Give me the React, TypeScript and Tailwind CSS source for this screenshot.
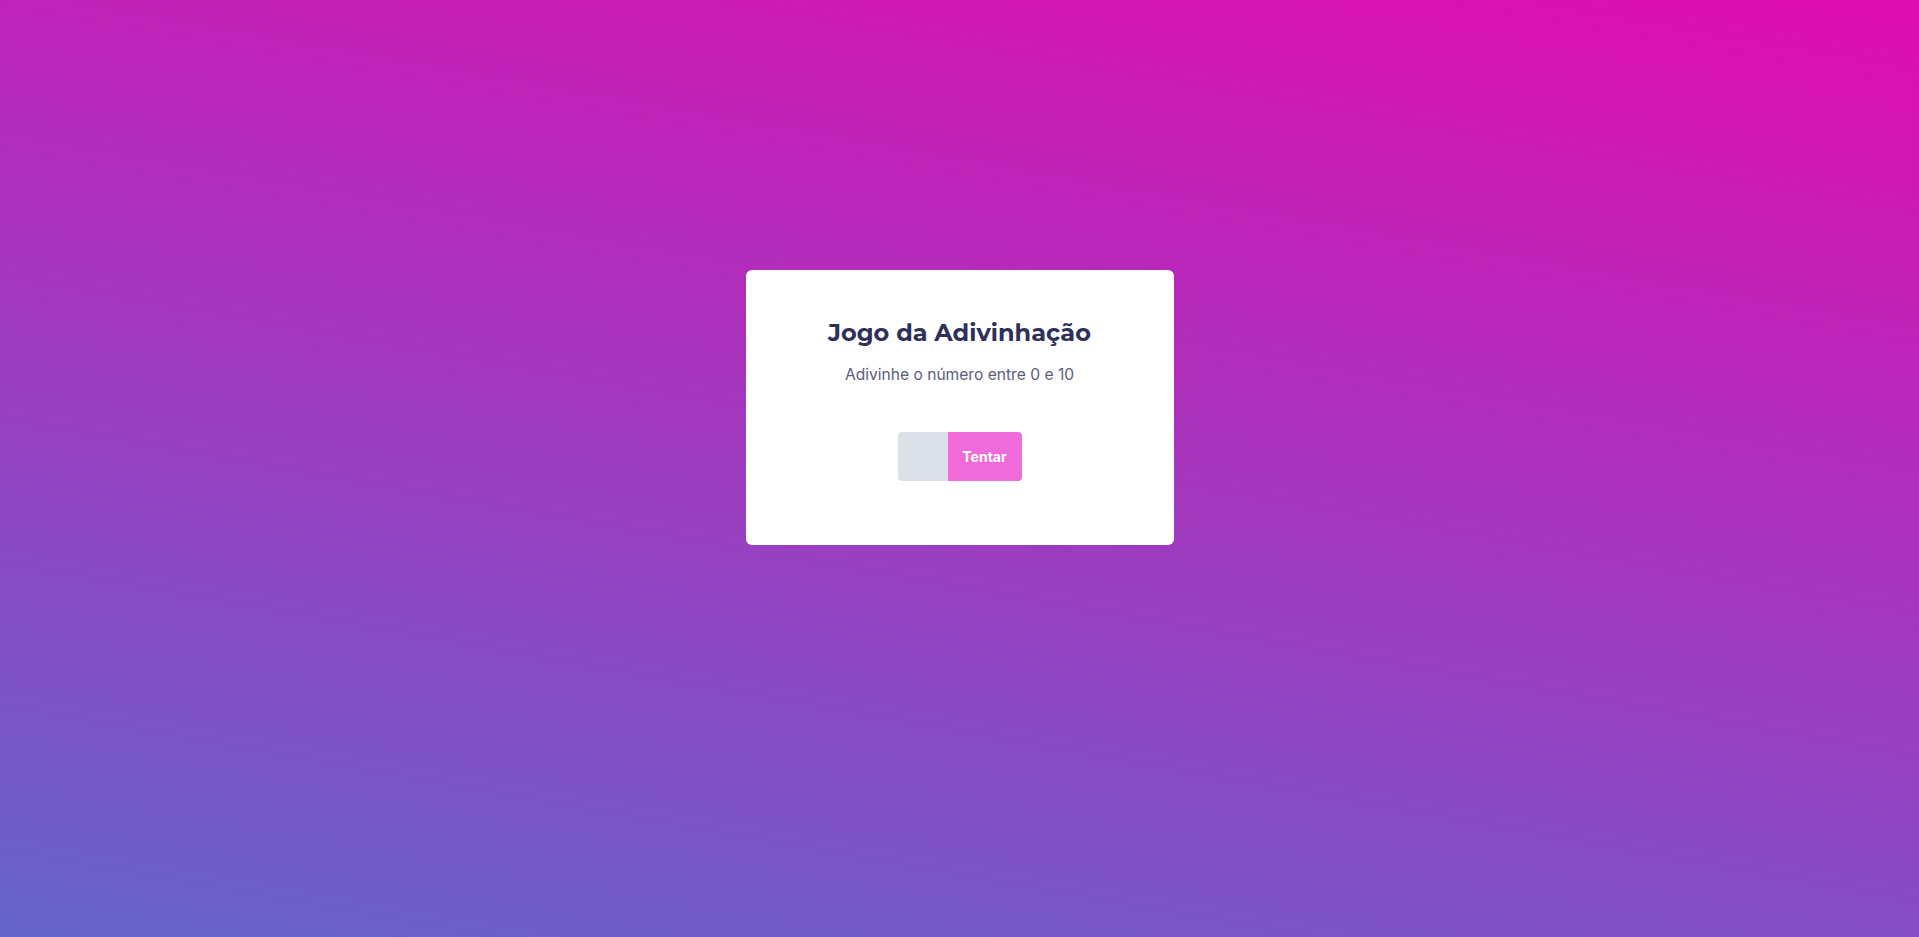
import { useState } from 'react'

const App = () => {
  const [guess, setGuess] = useState('')

  return (
    <div className="min-h-screen w-full flex justify-center pt-[270px] bg-[linear-gradient(10deg,#6465cc,#e00cb0)]">
      <div className="w-[428px] h-[275px] bg-white rounded-md flex flex-col items-center pt-[47px]">
        {/* Title */}
        <h1 className="text-[24px] leading-[32px] font-bold text-[#2e3058] font-['Montserrat','Inter',sans-serif]">
          Jogo da Adivinhação
        </h1>
        <p className="mt-[14px] text-[15.6px] leading-[24px] text-[#5b5c7c] font-['Inter',sans-serif]">
          Adivinhe o número entre 0 e 10
        </p>

        {/* Guess form */}
        <div className="mt-[45px] flex h-[49px]">
          <input
            value={guess}
            onChange={e => setGuess(e.target.value)}
            className="w-[50px] h-full bg-[#dbe1ea] rounded-l-[4px] outline-none text-center text-[#2e3058] font-['Inter',sans-serif]"
          />
          <button className="w-[74px] h-full bg-[#f16ad9] rounded-r-[4px] text-white text-[14px] font-bold font-['Inter',sans-serif]">
            Tentar
          </button>
        </div>
      </div>
    </div>
  )
}

export default App
